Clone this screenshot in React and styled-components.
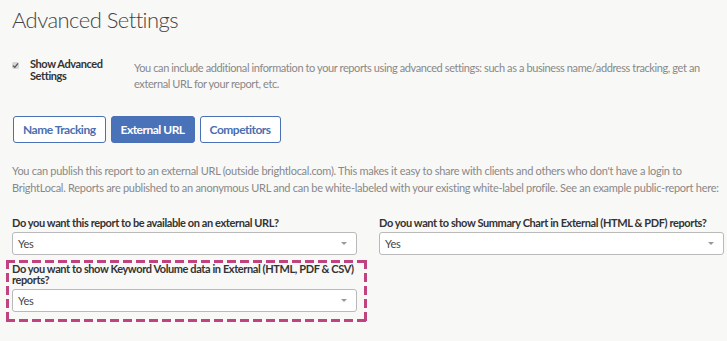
import React, { useState } from 'react';
import styled, { createGlobalStyle } from 'styled-components';

const GlobalStyle = createGlobalStyle`
  body {
    margin: 0;
    background: #f8f8f7;
    font-family: Lato, 'Open Sans', sans-serif;
    color: #333;
  }
`;

const tabs = ['Name Tracking', 'External URL', 'Competitors'];

const App = () => {
  const [active, setActive] = useState('External URL');

  return (
    <Page>
      <GlobalStyle />
      <Title>Advanced Settings</Title>

      <SettingRow>
        <CheckLabel>
          <CheckBox>
            <svg width="7" height="7" viewBox="0 0 7 7">
              <path d="M1 3.6 L2.8 5.3 L6 1.4" fill="none" stroke="#555" strokeWidth="1.3" />
            </svg>
          </CheckBox>
          <CheckText>Show Advanced Settings</CheckText>
        </CheckLabel>
        <Hint>
          <HintLine>
            You can include additional information to your reports using advanced settings: such as
            a business name/address tracking, get an
          </HintLine>
          <br />
          external URL for your report, etc.
        </Hint>
      </SettingRow>

      <TabBar>
        {tabs.map((t) => (
          <Tab key={t} active={t === active} onClick={() => setActive(t)}>
            {t}
          </Tab>
        ))}
      </TabBar>

      <Intro>
        You can publish this report to an external URL (outside brightlocal.com). This makes it easy
        to share with clients and others who don't have a login to BrightLocal. Reports are published
        to an anonymous URL and can be white-labeled with your existing white-label profile. See an
        example public-report here:
      </Intro>

      <FieldGrid>
        <Field>
          <Label>Do you want this report to be available on an external URL?</Label>
          <Select>
            Yes
            <Caret />
          </Select>
        </Field>
        <Field>
          <Label>Do you want to show Summary Chart in External (HTML &amp; PDF) reports?</Label>
          <Select>
            Yes
            <Caret />
          </Select>
        </Field>
        <Field highlighted>
          <Label>Do you want to show Keyword Volume data in External (HTML, PDF &amp; CSV) reports?</Label>
          <Select>
            Yes
            <Caret />
          </Select>
        </Field>
      </FieldGrid>
    </Page>
  );
};

export default App;

const dash = '#c0437f';

const Page = styled.div`
  padding: 0 2px 8px 12px;
`;

const Title = styled.h1`
  margin: 0;
  padding-top: 6px;
  font-size: 22px;
  line-height: 28px;
  font-weight: 300;
  letter-spacing: -0.55px;
  color: #444;
`;

const SettingRow = styled.div`
  display: flex;
  margin-top: 24px;
`;

const CheckLabel = styled.label`
  display: flex;
  align-items: flex-start;
  width: 122px;
  flex-shrink: 0;
`;

const CheckBox = styled.span`
  width: 7px;
  height: 7px;
  margin-top: 4px;
  border-radius: 2px;
  background: #d6d6d6;
  display: flex;
  align-items: center;
  justify-content: center;
`;

const CheckText = styled.span`
  margin-left: 11px;
  font-size: 11px;
  line-height: 12px;
  font-weight: 700;
  letter-spacing: -0.4px;
  color: #333;
  width: 90px;
`;

const Hint = styled.p`
  flex: 1;
  margin: 2px 0 0;
  font-size: 11px;
  line-height: 16px;
  letter-spacing: -0.4px;
  color: #888;
`;

const HintLine = styled.span`
  white-space: nowrap;
`;

const TabBar = styled.div`
  display: flex;
  gap: 5px;
  margin-top: 24px;
  margin-left: 1px;
`;

const Tab = styled.button`
  height: 27px;
  padding: 0 9px;
  border: 1px solid #4a70b5;
  border-radius: 3px;
  background: ${(p) => (p.active ? '#4a72b8' : '#fff')};
  color: ${(p) => (p.active ? '#fff' : '#4a6fb0')};
  font-family: inherit;
  font-size: 12px;
  font-weight: 700;
  letter-spacing: -0.5px;
  cursor: pointer;
`;

const Intro = styled.p`
  margin: 19px 2px 0 0;
  font-size: 11px;
  line-height: 17px;
  letter-spacing: -0.27px;
  color: #888;
`;

const FieldGrid = styled.div`
  display: grid;
  grid-template-columns: 345px 345px;
  column-gap: 22px;
  margin-top: 21px;
  align-items: start;
`;

const Field = styled.div`
  display: flex;
  flex-direction: column;
  ${(p) =>
    p.highlighted
      ? `
    margin: 5px -10px 0 -6px;
    padding: 3px 10px 10px 6px;
    background:
      repeating-linear-gradient(90deg, ${dash} 0 9px, transparent 9px 13px) top left / 100% 3px no-repeat,
      repeating-linear-gradient(90deg, ${dash} 0 9px, transparent 9px 13px) bottom left / 100% 3px no-repeat,
      repeating-linear-gradient(180deg, ${dash} 0 9px, transparent 9px 13px) top left / 3px 100% no-repeat,
      repeating-linear-gradient(180deg, ${dash} 0 9px, transparent 9px 13px) top right / 3px 100% no-repeat;
  `
      : ''}
`;

const Label = styled.div`
  font-size: 11px;
  line-height: 11px;
  font-weight: 700;
  letter-spacing: -0.4px;
  color: #333;
  margin-bottom: 4px;
`;

const Select = styled.div`
  position: relative;
  height: 23px;
  box-sizing: border-box;
  border: 1px solid #b9b9b9;
  border-radius: 3px;
  background: #fff;
  padding-left: 5px;
  font-size: 11px;
  line-height: 21px;
  letter-spacing: -0.2px;
  color: #444;
`;

const Caret = styled.span`
  position: absolute;
  right: 9px;
  top: 9px;
  width: 0;
  height: 0;
  border-left: 3px solid transparent;
  border-right: 3px solid transparent;
  border-top: 3px solid #999;
`;
